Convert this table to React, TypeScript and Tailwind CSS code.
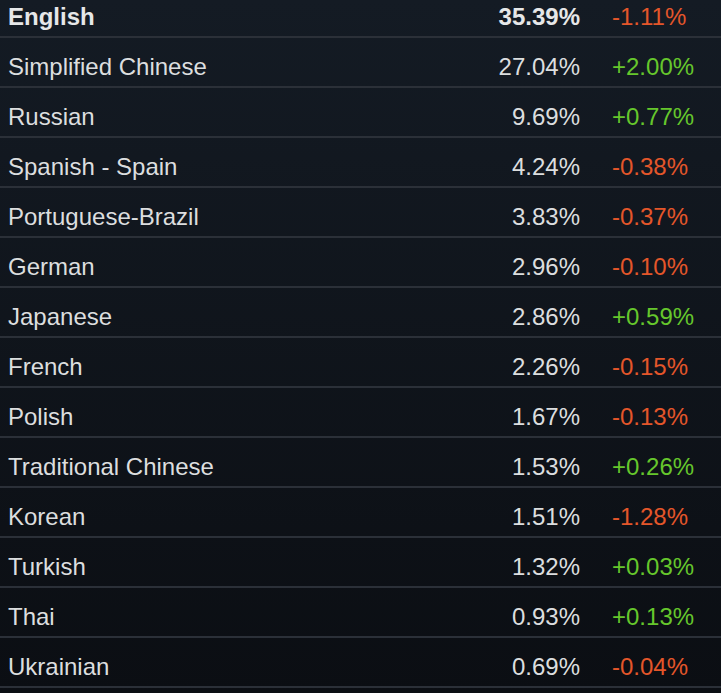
const rows = [
  { name: 'English', pct: '35.39%', change: '-1.11%', bold: true },
  { name: 'Simplified Chinese', pct: '27.04%', change: '+2.00%' },
  { name: 'Russian', pct: '9.69%', change: '+0.77%' },
  { name: 'Spanish - Spain', pct: '4.24%', change: '-0.38%' },
  { name: 'Portuguese-Brazil', pct: '3.83%', change: '-0.37%' },
  { name: 'German', pct: '2.96%', change: '-0.10%' },
  { name: 'Japanese', pct: '2.86%', change: '+0.59%' },
  { name: 'French', pct: '2.26%', change: '-0.15%' },
  { name: 'Polish', pct: '1.67%', change: '-0.13%' },
  { name: 'Traditional Chinese', pct: '1.53%', change: '+0.26%' },
  { name: 'Korean', pct: '1.51%', change: '-1.28%' },
  { name: 'Turkish', pct: '1.32%', change: '+0.03%' },
  { name: 'Thai', pct: '0.93%', change: '+0.13%' },
  { name: 'Ukrainian', pct: '0.69%', change: '-0.04%' },
];

export default function App() {
  return (
    <div className="h-[693px] w-[721px] overflow-hidden bg-gradient-to-b from-[#141b24] to-[#0b0e13] font-['Liberation_Sans',Arial,sans-serif] text-[24px] text-[#dcdedf]">
      <div className="-mt-3">
        {rows.map((row) => (
          <div
            key={row.name}
            className="flex h-[50px] items-center border-b-2 border-[#2b3038] pt-[9px]"
          >
            <div className={`flex-1 pl-2 ${row.bold ? 'font-bold text-[#e6e7e8]' : ''}`}>
              {row.name}
            </div>
            <div className={`text-right ${row.bold ? 'font-bold text-[#e6e7e8]' : ''}`}>
              {row.pct}
            </div>
            <div
              className={`w-[141px] pl-[32px] ${
                row.change.startsWith('+') ? 'text-[#66c72c]' : 'text-[#e4562a]'
              }`}
            >
              {row.change}
            </div>
          </div>
        ))}
      </div>
    </div>
  );
}
